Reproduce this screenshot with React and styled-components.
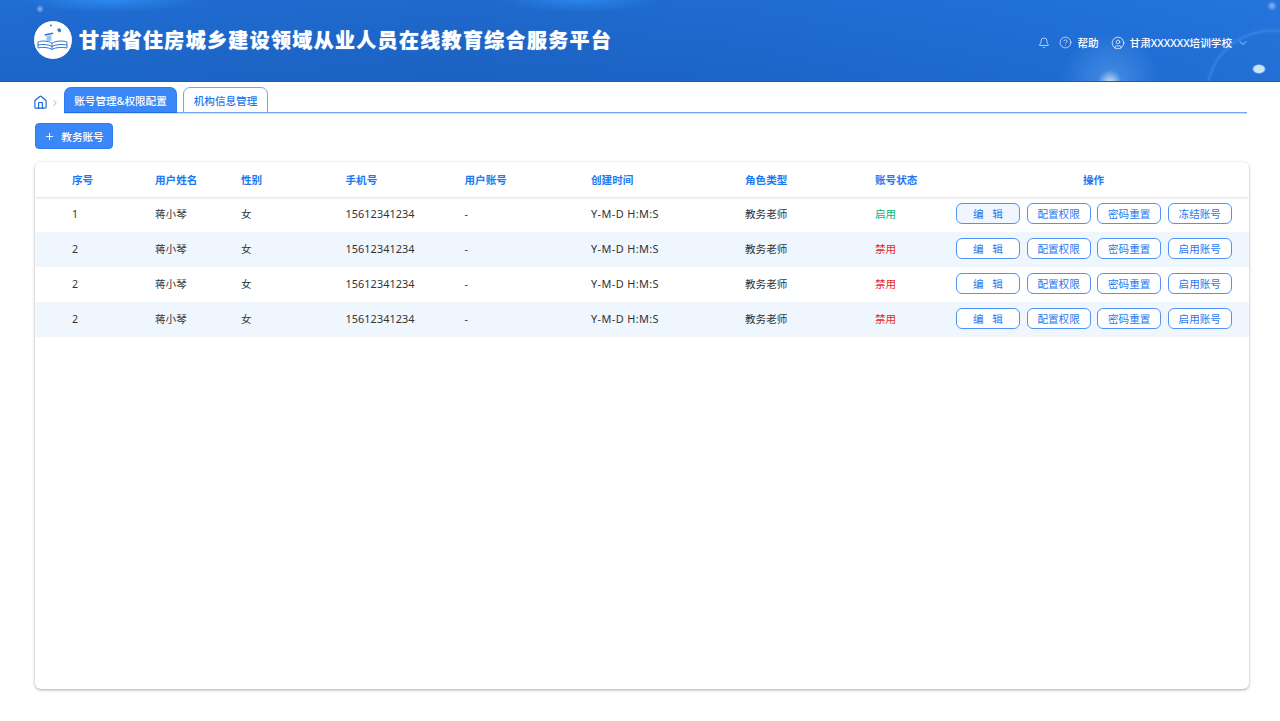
import React from "react";
import styled, { createGlobalStyle } from "styled-components";
import { Bell, CircleHelp, CircleUser, ChevronDown, ChevronRight, Home, Plus } from "lucide-react";

const Global = createGlobalStyle`
  html, body { margin: 0; padding: 0; background: #fff; }
  body { font-family: "Noto Sans", "Noto Sans CJK SC", sans-serif; font-size: 10.6px; color: #333; }
  * { box-sizing: border-box; }
`;

const Page = styled.div`
  width: 1280px;
  height: 721px;
  display: flex;
  flex-direction: column;
  overflow: hidden;
  background: #fff;
`;

const Header = styled.header`
  height: 82px;
  flex: none;
  display: flex;
  align-items: center;
  justify-content: space-between;
  padding: 0 31px 2px 33px;
  color: #fff;
  border-bottom: 1px solid #1a5fc0;
  background:
    radial-gradient(circle at 1110px 82px, rgba(255,255,255,.75) 0, rgba(130,190,255,.3) 12px, rgba(60,140,240,0) 50px),
    radial-gradient(ellipse 7px 5px at 1259px 69px, rgba(225,240,255,.9) 0 70%, rgba(225,240,255,0) 100%),
    radial-gradient(circle at 1272px 96px, rgba(60,130,225,0) 0 63px, rgba(120,180,245,.22) 65px, rgba(60,130,225,.08) 68px, rgba(60,130,225,0) 72px),
    radial-gradient(circle 4px at 40px 9px, rgba(190,215,250,.7) 0, rgba(190,215,250,0) 100%),
    radial-gradient(circle 5px at 1272px 6px, rgba(190,215,250,.7) 0, rgba(190,215,250,0) 100%),
    radial-gradient(ellipse 90px 12px at 110px 0, rgba(50,150,250,.7) 0, rgba(50,150,250,0) 100%),
    radial-gradient(ellipse 80px 12px at 580px 0, rgba(50,150,250,.6) 0, rgba(50,150,250,0) 100%),
    linear-gradient(180deg, rgba(40,120,230,.25) 0, rgba(20,80,170,.12) 100%),
    linear-gradient(100deg, #1d69cd 0%, #1c64c4 35%, #1c68cc 60%, #1f6fd6 85%, #2474da 100%);
`;

const Brand = styled.div`
  display: flex;
  align-items: center;
  gap: 6px;
`;

const LogoMark = styled.svg`
  width: 40px;
  height: 40px;
  flex: none;
`;

const Title = styled.h1`
  margin: 0;
  font-family: "Noto Sans CJK SC", sans-serif;
  font-weight: 900;
  font-size: 20px;
  letter-spacing: 1.33px;
  white-space: nowrap;
  color: #fff;
  text-shadow: 0 0 1px rgba(255, 255, 255, 0.6);
`;

const Tools = styled.div`
  display: flex;
  align-items: center;
  font-size: 10.6px;
  font-weight: 500;
  margin-top: 6px;
`;

const Tool = styled.div`
  display: flex;
  align-items: center;
  gap: ${p => p.$gap || 5}px;
  margin-left: ${p => p.$ml || 0}px;
`;

const Content = styled.main`
  flex: 1;
  display: flex;
  flex-direction: column;
  padding: 4px 31px 32px 35px;
  min-height: 0;
`;

const TabBar = styled.div`
  display: flex;
  align-items: flex-end;
  height: 27px;
  margin-left: -2px;
  flex: none;
`;

const Crumb = styled.div`
  display: flex;
  align-items: center;
  width: 31px;
  height: 26px;
  color: #1565d8;
  flex: none;
  padding-top: 5px;
`;

const TabLine = styled.div`
  flex: 1;
  display: flex;
  gap: 6px;
  height: 27px;
  align-items: flex-end;
  border-bottom: 1px solid #6ea8f5;
  box-shadow: 0 1px 0 #cfe2fb;
  margin-right: 2px;
`;

const Tab = styled.div`
  height: 26px;
  display: flex;
  align-items: center;
  justify-content: center;
  width: ${p => p.$w}px;
  margin-bottom: -1px;
  border-radius: 7px 7px 0 0;
  font-size: 10.6px;
  font-weight: 500;
  white-space: nowrap;
  color: ${p => (p.$active ? "#fff" : "#1f78f0")};
  background: ${p => (p.$active ? "#3a88f7" : "#fff")};
  border: 1px solid ${p => (p.$active ? "#2f7df0" : "#6ea8f5")};
  border-bottom: ${p => (p.$active ? "1px solid #1f6fe0" : "1px solid #6ea8f5")};
`;

const AddButton = styled.button`
  margin-top: 10px;
  width: 78px;
  height: 26px;
  flex: none;
  display: flex;
  align-items: center;
  justify-content: center;
  gap: 6px;
  padding: 0;
  border-radius: 4px;
  background: #3a88f7;
  border: 1px solid #2f7df0;
  color: #fff;
  font: 500 10.6px "Noto Sans", "Noto Sans CJK SC", sans-serif;
`;

const Card = styled.section`
  margin-top: 13px;
  flex: 1;
  min-height: 0;
  background: #fff;
  border-radius: 6px;
  box-shadow: 0 1px 3px rgba(0, 0, 0, 0.35);
  overflow: hidden;
`;

const Row = styled.div`
  display: grid;
  grid-template-columns: 83px 86px 104.5px 119px 126.5px 154px 130px 81px 1fr;
  align-items: center;
  padding-left: 37px;
  padding-bottom: ${p => (p.$head ? 0 : 1.5)}px;
  height: 35px;
  background: ${p => (p.$alt ? "#eff6fe" : "#fff")};
  color: ${p => (p.$head ? "#1f7af0" : "#333")};
  font-weight: ${p => (p.$head ? 700 : 400)};
  box-shadow: ${p => (p.$head ? "0 1px 2px rgba(0,0,0,.14)" : "none")};
  position: ${p => (p.$head ? "relative" : "static")};
  z-index: ${p => (p.$head ? 1 : "auto")};
`;

const Latin = styled.span`
  font-size: 10.9px;
  letter-spacing: ${p => p.$ls || 0}px;
`;

const Status = styled.span`
  color: ${p => (p.$on ? "#00b578" : "#e8262d")};
`;

const OpsHead = styled.div`
  text-align: center;
  padding-right: 18px;
`;

const Ops = styled.div`
  display: flex;
  gap: 6.6px;
`;

const OpButton = styled.button`
  width: 64px;
  height: 21px;
  padding: 0;
  border-radius: 6px;
  border: 1px solid #4f94f5;
  background: ${p => (p.$soft ? "#eff6fe" : "#fff")};
  color: #1f78f0;
  font: 400 10.6px "Noto Sans", "Noto Sans CJK SC", sans-serif;
  white-space: nowrap;
  word-spacing: ${p => (p.$wide ? "6px" : "0")};
`;

const Logo = () => (
  <LogoMark viewBox="0 0 40 40">
    <circle cx="20" cy="20" r="19.5" fill="#fff" stroke="#1a5fc0" strokeWidth="1" />
    <g fill="none" stroke="#2a78d8" strokeWidth="1">
      <path d="M5 22c4-1.6 10-1.2 14 1.2 4-2.4 10-2.8 15-1.2v6c-5-1.2-11-.8-15 1.4-4-2.2-10-2.6-14-1.4z" />
      <path d="M5 25c4-1 10-.6 14 1.4 4-2 10-2.4 15-1.4" />
      <path d="M19 23v6" />
    </g>
    <path d="M11.5 14.2l8.5-1.6.3 1.5-8.5 1.6z" fill="#2a78d8" />
    <path d="M13.5 15.5h5v5.5h-5z" fill="#9cc4f2" />
    <path d="M24 9l3-.8 1.4 3-2.6 1.2z" fill="#2a78d8" />
    <circle cx="18" cy="5.5" r="1" fill="#2a78d8" />
  </LogoMark>
);

const rows = [
  { n: 1, on: true, last: "冻结账号" },
  { n: 2, on: false, last: "启用账号" },
  { n: 2, on: false, last: "启用账号" },
  { n: 2, on: false, last: "启用账号" },
];

export default function App() {
  return (
    <Page>
      <Global />
      <Header>
        <Brand>
          <Logo />
          <Title>甘肃省住房城乡建设领域从业人员在线教育综合服务平台</Title>
        </Brand>
        <Tools>
          <Tool><Bell size={12} strokeWidth={1.3} /></Tool>
          <Tool $ml={9}><CircleHelp size={13} strokeWidth={1.2} /><span>帮助</span></Tool>
          <Tool $ml={12}><CircleUser size={14} strokeWidth={1.2} /><span>甘肃XXXXXX培训学校</span></Tool>
          <Tool $ml={5}><ChevronDown size={12} strokeWidth={1.3} /></Tool>
        </Tools>
      </Header>
      <Content>
        <TabBar>
          <Crumb>
            <Home size={15} strokeWidth={1.8} />
            <ChevronRight size={10} strokeWidth={1.4} color="#5b7ea8" style={{ marginLeft: 2 }} />
          </Crumb>
          <TabLine>
            <Tab $active $w={113}>账号管理&amp;权限配置</Tab>
            <Tab $w={85}>机构信息管理</Tab>
          </TabLine>
        </TabBar>
        <AddButton><Plus size={11} strokeWidth={2} /><span>教务账号</span></AddButton>
        <Card>
          <Row $head>
            <div>序号</div>
            <div>用户姓名</div>
            <div>性别</div>
            <div>手机号</div>
            <div>用户账号</div>
            <div>创建时间</div>
            <div>角色类型</div>
            <div>账号状态</div>
            <OpsHead>操作</OpsHead>
          </Row>
          {rows.map((r, i) => (
            <Row key={i} $alt={i % 2 === 1}>
              <div>{r.n}</div>
              <div>蒋小琴</div>
              <div>女</div>
              <div><Latin $ls={0.05}>15612341234</Latin></div>
              <div>-</div>
              <div><Latin $ls={0.4}>Y-M-D H:M:S</Latin></div>
              <div>教务老师</div>
              <div><Status $on={r.on}>{r.on ? "启用" : "禁用"}</Status></div>
              <Ops>
                <OpButton $wide $soft={i === 0}>编 辑</OpButton>
                <OpButton>配置权限</OpButton>
                <OpButton>密码重置</OpButton>
                <OpButton>{r.last}</OpButton>
              </Ops>
            </Row>
          ))}
        </Card>
      </Content>
    </Page>
  );
}
